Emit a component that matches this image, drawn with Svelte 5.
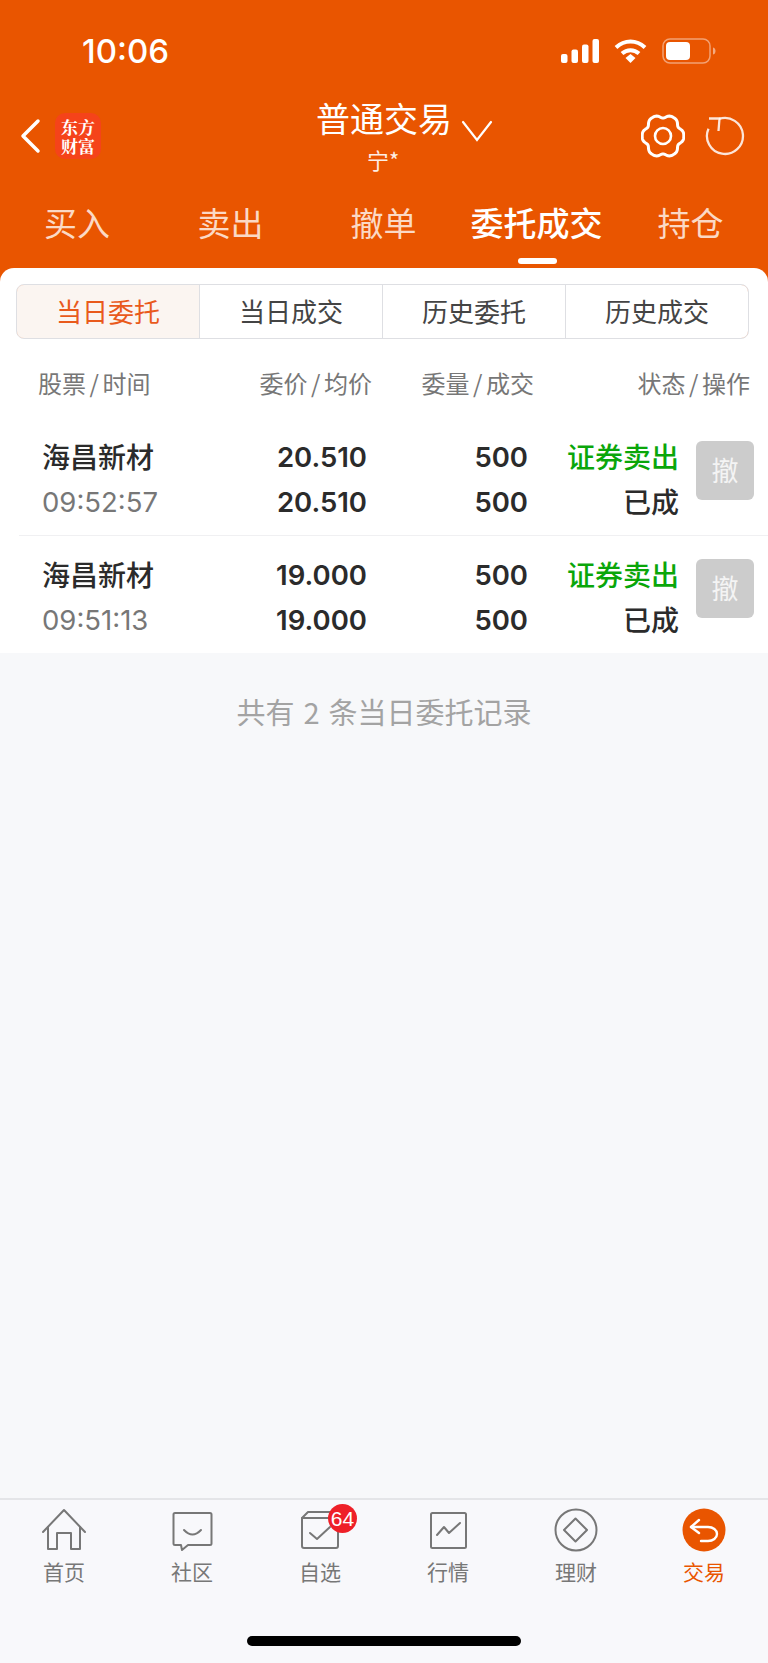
<script>
  const tabs = [
    { name: '买入', width: 154 },
    { name: '卖出', width: 153 },
    { name: '撤单', width: 153 },
    { name: '委托成交', width: 153, active: true },
    { name: '持仓', width: 155 },
  ]
  const subTabs = ['当日委托', '当日成交', '历史委托', '历史成交']
  const heads = [
    { cls: 'col-name', a: '股票', b: '时间' },
    { cls: 'col-price', a: '委价', b: '均价' },
    { cls: 'col-qty', a: '委量', b: '成交' },
    { cls: 'col-status', a: '状态', b: '操作' },
  ]
  const orders = [
    { name: '海昌新材', time: '09:52:57', price: '20.510', avg: '20.510' },
    { name: '海昌新材', time: '09:51:13', price: '19.000', avg: '19.000' },
  ]
  const navItems = [
    { name: '首页', icon: 'home' },
    { name: '社区', icon: 'chat' },
    { name: '自选', icon: 'box', badge: '64' },
    { name: '行情', icon: 'chart' },
    { name: '理财', icon: 'diamond' },
    { name: '交易', icon: 'trade', active: true },
  ]

  // wavy six lobed outline of the settings icon, valleys narrower than lobes
  function gearOutline() {
    let d = ''
    for (let i = 0; i < 120; i++) {
      const t = (i / 120) * Math.PI * 2
      const dip = (1 - Math.cos(6 * t)) / 2
      const r = 20.8 - 3.4 * dip * dip
      const x = 22 + r * Math.cos(t)
      const y = 22 + r * 1.03 * Math.sin(t)
      d += `${i === 0 ? 'M' : 'L'}${x.toFixed(2)} ${y.toFixed(2)}`
    }
    return d + 'Z'
  }
</script>

<div class="page">
  <header class="top">
    <div class="status">
      <span class="clock">10:06</span>
      <div class="status-icons">
        <svg width="38" height="24" viewBox="0 0 38 24" fill="#fff">
          <rect x="0" y="15" width="6.500" height="9" rx="2" />
          <rect x="10.500" y="10.500" width="6.500" height="13.500" rx="2" />
          <rect x="21" y="5.500" width="6.500" height="18.500" rx="2" />
          <rect x="31.500" y="0" width="6.500" height="24" rx="2" />
        </svg>
        <svg width="33" height="24" viewBox="0 0 33 24" fill="none" stroke="#fff" stroke-width="4">
          <path d="M2 8.500C10.500 0.500 22.500 0.500 31 8.500" />
          <path d="M8 14.500C13 10 20 10 25 14.500" />
          <path d="M11.500 19l5-4 5 4-5 5z" fill="#fff" stroke="none" />
        </svg>
        <svg width="54" height="26" viewBox="0 0 54 26" fill="none">
          <rect x="1" y="1" width="47" height="24" rx="7" stroke="#fff" stroke-opacity="0.45" stroke-width="1.500" />
          <rect x="4" y="4" width="24" height="18" rx="4" fill="#fff" />
          <path d="M51 9.500c2 0.500 2.500 2 2.500 3.500s-0.500 3-2.500 3.500z" fill="#fff" fill-opacity="0.5" />
        </svg>
      </div>
    </div>

    <div class="title-bar">
      <div class="title-left">
        <svg width="22" height="36" viewBox="0 0 22 36" fill="none" stroke="#fff" stroke-width="3.500" stroke-linecap="round" stroke-linejoin="round">
          <path d="M19 3L4 18l15 15" />
        </svg>
        <div class="logo"><span>东方</span><span>财富</span></div>
      </div>
      <div class="title-center">
        <div class="title-row">
          <span class="title">普通交易</span>
          <svg class="chevron" width="32" height="22" viewBox="0 0 32 22" fill="none" stroke="#fff" stroke-width="2.200" stroke-linecap="round">
            <path d="M2 2l14 18L30 2" />
          </svg>
        </div>
        <div class="account">宁*</div>
      </div>
      <div class="title-right">
        <svg width="44" height="44" viewBox="0 0 44 44" fill="none" stroke="#fff" stroke-width="3" stroke-linejoin="round">
          <path d={gearOutline()} />
          <circle cx="22" cy="22" r="8" stroke-width="2.600" />
        </svg>
        <svg width="40" height="40" viewBox="0 0 40 40" fill="none" stroke="#fff" stroke-opacity="0.85" stroke-width="2.300">
          <path d="M14 3A18 18 0 1 1 3.500 12.700" />
          <path d="M4 2.500H14.500L13.500 15" />
        </svg>
      </div>
    </div>

    <nav class="tabs">
      {#each tabs as tab}
        <div class="tab" class:active={tab.active} style={`width: ${tab.width}px`}>{tab.name}</div>
      {/each}
    </nav>
  </header>

  <main class="content">
    <section class="sheet">
      <div class="segments">
        {#each subTabs as item, i}
          <div class="segment" class:selected={i === 0}>{item}</div>
        {/each}
      </div>

      <div class="row head">
        {#each heads as h}
          <div class={h.cls}>{h.a}<span class="slash">/</span>{h.b}</div>
        {/each}
      </div>

      {#each orders as order, i}
        <div class="row order" class:divided={i > 0}>
          <div class="col-name">
            <div class="stock">{order.name}</div>
            <div class="time">{order.time}</div>
          </div>
          <div class="col-price num">
            <div>{order.price}</div>
            <div>{order.avg}</div>
          </div>
          <div class="col-qty num">
            <div>500</div>
            <div>500</div>
          </div>
          <div class="col-state">
            <div class="sell">证券卖出</div>
            <div class="done">已成</div>
          </div>
          <div class="cancel">撤</div>
        </div>
      {/each}
    </section>

    <p class="summary">共有 2 条当日委托记录</p>
  </main>

  <footer class="bottom">
    <div class="nav">
      {#each navItems as item}
        <div class="nav-item" class:on={item.active}>
          <div class="nav-icon">
            {#if item.icon === 'home'}
              <svg width="44" height="44" viewBox="0 0 44 44" fill="none" stroke="#777" stroke-width="2" stroke-linejoin="round" stroke-linecap="round">
                <path d="M1 24L22 2l21 22" />
                <path d="M6 19v22h9V25h14v16h9V19" />
              </svg>
            {:else if item.icon === 'chat'}
              <svg width="44" height="44" viewBox="0 0 44 44" fill="none" stroke="#777" stroke-width="2" stroke-linejoin="round" stroke-linecap="round">
                <path d="M5 5h35a1.500 1.500 0 0 1 1.500 1.500v29a1.500 1.500 0 0 1-1.500 1.500H18l-6 5-1-5H5a1.500 1.500 0 0 1-1.500-1.500v-29A1.500 1.500 0 0 1 5 5z" />
                <path d="M14 22q8.500 9 17 0" />
              </svg>
            {:else if item.icon === 'box'}
              <svg width="44" height="44" viewBox="0 0 44 44" fill="none" stroke="#777" stroke-width="2" stroke-linejoin="round" stroke-linecap="round">
                <path d="M4 10l6-6h24" />
                <path d="M4 10h30M4 10v28a2 2 0 0 0 2 2h32a2 2 0 0 0 2-2V20" />
                <path d="M12 25l7 6 13-12" />
              </svg>
            {:else if item.icon === 'chart'}
              <svg width="44" height="44" viewBox="0 0 44 44" fill="none" stroke="#777" stroke-width="2" stroke-linejoin="round" stroke-linecap="round">
                <rect x="5" y="5" width="35" height="35" rx="1.500" />
                <path d="M11 27l7-8 5 6 11-10" />
              </svg>
            {:else if item.icon === 'diamond'}
              <svg width="44" height="44" viewBox="0 0 44 44" fill="none" stroke="#777" stroke-width="2" stroke-linejoin="round">
                <circle cx="22" cy="22" r="20.500" />
                <path d="M21.500 10.500l11.500 11.500-11.500 11.500-11.500-11.500z" />
              </svg>
            {:else if item.icon === 'trade'}
              <svg width="44" height="44" viewBox="0 0 44 44" fill="none" stroke="#fff" stroke-width="2.400" stroke-linecap="round" stroke-linejoin="round">
                <circle cx="22" cy="22" r="21.500" fill="#e95500" stroke="none" />
                <path d="M17 12l-8 7 8 6" />
                <path d="M9 19h17c5 0 9 3 9 7s-4 7-9 7h-7" />
              </svg>
            {/if}
            {#if item.badge}
              <span class="badge">{item.badge}</span>
            {/if}
          </div>
          <span class="nav-label">{item.name}</span>
        </div>
      {/each}
    </div>
    <div class="home-bar"></div>
  </footer>
</div>

<style>
  :global(body) {
    margin: 0;
    background: #f7f8fa;
  }

  .page {
    width: 768px;
    height: 1663px;
    display: flex;
    flex-direction: column;
    overflow: hidden;
    font-family: "Noto Sans CJK SC", "Noto Sans", sans-serif;
    background: #f7f8fa;
  }

  .top {
    background: #e95500;
    height: 282px;
    flex: none;
    color: #fff;
  }

  .status {
    height: 96px;
    display: flex;
    justify-content: space-between;
    align-items: center;
    padding: 6px 52px 0 82px;
    box-sizing: border-box;
  }

  .clock {
    font-family: Inter, "Liberation Sans", sans-serif;
    font-size: 33px;
    font-weight: 500;
    line-height: 1;
  }

  .status-icons {
    display: flex;
    align-items: center;
    gap: 15px;
  }

  .title-bar {
    height: 84px;
    display: flex;
    align-items: flex-start;
    padding: 0 23px 0 19px;
  }

  .title-left {
    width: 297px;
    flex: none;
    display: flex;
    align-items: center;
    gap: 14px;
    padding-top: 17px;
  }

  .logo {
    width: 46px;
    height: 46px;
    border-radius: 10px;
    background: #f5431a;
    display: flex;
    flex-direction: column;
    align-items: center;
    justify-content: center;
    font-family: "Noto Serif CJK SC", "Noto Sans CJK SC", serif;
    font-size: 17px;
    font-weight: 700;
    line-height: 19px;
  }

  .title-center {
    padding-top: 3px;
  }

  .title-row {
    display: flex;
    align-items: flex-start;
    gap: 9px;
  }

  .title {
    font-size: 34px;
    line-height: 38px;
  }

  .chevron {
    margin-top: 21px;
  }

  .account {
    font-size: 22px;
    line-height: 24px;
    margin: 5px 0 0 51px;
    color: #fdeee5;
  }

  .title-right {
    margin-left: auto;
    display: flex;
    align-items: center;
    gap: 20px;
    padding-top: 18px;
  }

  .tabs {
    display: flex;
    height: 88px;
  }

  .tab {
    text-align: center;
    font-size: 33px;
    line-height: 38px;
    padding-top: 23px;
    box-sizing: border-box;
    color: #fbd9c5;
    position: relative;
  }

  .tab.active {
    color: #fff;
    font-weight: 500;
    white-space: nowrap;
  }

  .tab.active::after {
    content: '';
    position: absolute;
    left: 50%;
    margin-left: -19px;
    top: 78px;
    width: 39px;
    height: 6px;
    border-radius: 3px;
    background: #fff;
  }

  .content {
    flex: 1;
    background: #f7f8fa;
  }

  .sheet {
    position: relative;
    margin-top: -14px;
    background: #fff;
    border-radius: 14px 14px 0 0;
    padding-top: 16px;
  }

  .segments {
    display: flex;
    position: relative;
    margin: 0 19px 0 16px;
    height: 55px;
    box-sizing: border-box;
    border: 1px solid #dedfe3;
    border-radius: 8px;
    overflow: hidden;
  }

  .segments::before,
  .segments::after {
    content: '';
    position: absolute;
    top: -1px;
    bottom: -1px;
    width: 9px;
    border: 1px solid #f3b79a;
    box-sizing: border-box;
    border-radius: 8px;
  }

  .segments::before {
    left: -1px;
    border-right: 0;
    border-radius: 8px 0 0 8px;
  }

  .segments::after {
    right: -1px;
    border-left: 0;
    border-radius: 0 8px 8px 0;
  }

  .segment {
    flex: 1;
    text-align: center;
    font-size: 26px;
    line-height: 52px;
    color: #444;
    border-left: 1px solid #dedfe3;
  }

  .segment:first-child {
    border-left: 0;
  }

  .segment.selected {
    background: #fbf5f1;
    color: #e95a1c;
  }

  .row {
    display: flex;
    align-items: flex-start;
  }

  .head {
    height: 78px;
    padding-top: 27px;
    box-sizing: border-box;
    font-size: 24px;
    line-height: 34px;
    color: #777;
    text-align: right;
    white-space: nowrap;
  }

  .slash {
    margin: 0 3.500px;
  }

  .head .col-name {
    width: 152px;
    padding-left: 38px;
    box-sizing: border-box;
    text-align: left;
  }

  .head .col-price {
    width: 220px;
  }

  .head .col-qty {
    width: 162px;
  }

  .head .col-status {
    width: 216px;
  }

  .order {
    height: 118px;
    box-sizing: border-box;
    margin-left: 19px;
    padding-top: 17px;
  }

  .order.divided {
    border-top: 1px solid #f0f0f2;
    padding-top: 16px;
  }

  .order .col-name {
    width: 133px;
    padding-left: 23px;
    box-sizing: border-box;
    flex: none;
  }

  .stock {
    font-size: 28px;
    font-weight: 500;
    line-height: 45px;
    color: #2b2b2b;
    white-space: nowrap;
  }

  .time {
    font-family: Inter, "Liberation Sans", sans-serif;
    font-size: 27.500px;
    line-height: 45px;
    margin-top: 1px;
    color: #777;
    white-space: nowrap;
  }

  .num {
    font-family: Inter, "Liberation Sans", sans-serif;
    font-size: 27.500px;
    font-weight: 600;
    line-height: 45px;
    padding-top: 1px;
    color: #2b2b2b;
    text-align: right;
  }

  .order .col-price {
    width: 215px;
    flex: none;
  }

  .order .col-qty {
    width: 161px;
    flex: none;
  }

  .col-state {
    width: 151px;
    flex: none;
    text-align: right;
    font-size: 28px;
    font-weight: 500;
    line-height: 45px;
  }

  .sell {
    color: #0aa60a;
  }

  .done {
    color: #2b2b2b;
  }

  .cancel {
    width: 58px;
    height: 59px;
    margin: 7px 0 0 17px;
    flex: none;
    border-radius: 6px;
    background: #cccccc;
    color: #f4f4f4;
    text-align: center;
    font-size: 27px;
    line-height: 58px;
  }

  .summary {
    margin: 40px 0 0;
    text-align: center;
    font-size: 29px;
    line-height: 36px;
    word-spacing: 2.500px;
    color: #a3a3a3;
  }

  .bottom {
    height: 165px;
    flex: none;
    box-sizing: border-box;
    border-top: 2px solid #e4e5e8;
    background: #f8f8fb;
  }

  .nav {
    display: flex;
    padding: 8px 0 0 0;
  }

  .nav-item {
    width: 128px;
    display: flex;
    flex-direction: column;
    align-items: center;
    color: #777;
  }

  .nav-item.on {
    color: #e95500;
  }

  .nav-icon {
    position: relative;
    width: 44px;
    height: 44px;
  }

  .nav-icon svg {
    display: block;
  }

  .nav-label {
    font-size: 21px;
    line-height: 28px;
    margin-top: 5px;
  }

  .badge {
    position: absolute;
    right: -15px;
    top: -4px;
    width: 29px;
    height: 29px;
    border-radius: 50%;
    background: #ee2028;
    color: #fff;
    font-family: "Liberation Sans", sans-serif;
    font-size: 21px;
    line-height: 29px;
    text-align: center;
  }

  .home-bar {
    width: 274px;
    height: 10px;
    margin: 51px auto 0;
    border-radius: 5px;
    background: #000;
  }
</style>
